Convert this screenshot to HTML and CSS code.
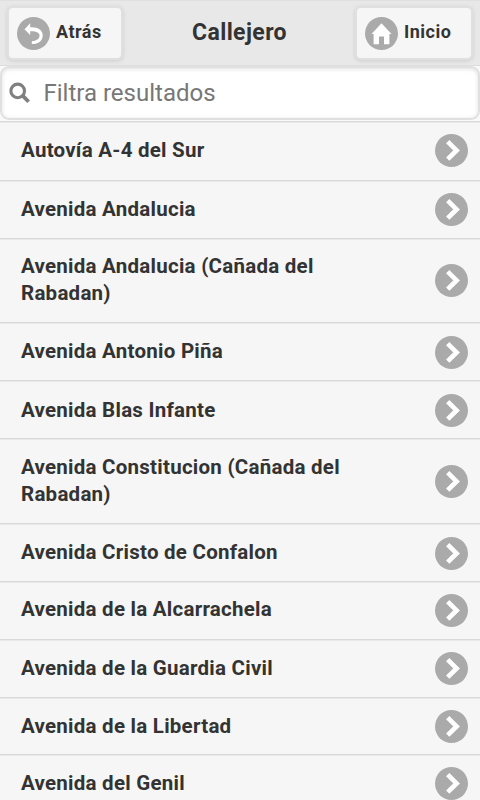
FILE: index.html
```html
<!DOCTYPE html>
<html lang="es">
<head>
<meta charset="utf-8">
<meta name="viewport" content="width=device-width">
<title>Callejero</title>
<link rel="stylesheet" href="styles.css">
</head>
<body>
<svg class="symbols" aria-hidden="true">
  <symbol id="next" viewBox="0 0 33 33"><circle cx="16.5" cy="16.5" r="16.5" fill="#aaa"/><path d="M12.7 7.6 21.6 16.4 12.7 25.2" fill="none" stroke="#fff" stroke-width="4.7"/></symbol>
</svg>
<header class="header">
  <a class="button">
    <svg class="button-icon" viewBox="0 0 33 33"><circle cx="16.5" cy="16.5" r="16.5" fill="#aaa"/><path d="M7.5 12.3 13.2 6.2V10.2C21 9.8 25.7 13.1 25.7 18.2 25.7 23.8 21.8 27 14.8 27V24.3C19.5 24 22.5 21.8 22.5 18.6 22.5 15.7 19.4 14.1 13.2 14.3V18Z" fill="#fff"/></svg>
    <span class="button-text">Atrás</span>
  </a>
  <h1 class="title">Callejero</h1>
  <a class="button button-home">
    <svg class="button-icon" viewBox="0 0 33 33"><circle cx="16.5" cy="16.5" r="16.5" fill="#aaa"/><path d="M16.5 6.3 26.5 17H24.4V27.3H19V19.5H14V27.3H8.6V17H6.5Z" fill="#fff"/></svg>
    <span class="button-text">Inicio</span>
  </a>
</header>
<div class="search">
  <svg class="search-icon" viewBox="0 0 22 22"><circle cx="8.7" cy="8.9" r="6.8" fill="none" stroke="#808080" stroke-width="3.1"/><path d="M13.4 13.4 19.6 19.8" stroke="#808080" stroke-width="3.8"/></svg>
  <span class="placeholder">Filtra resultados</span>
</div>
<ul class="list">
  <li class="item upper"><span class="label">Autovía A-4 del Sur</span><svg class="arrow"><use href="#next"/></svg></li>
  <li class="item"><span class="label">Avenida Andalucia</span><svg class="arrow"><use href="#next"/></svg></li>
  <li class="item upper"><span class="label">Avenida Andalucia (Cañada del Rabadan)</span><svg class="arrow"><use href="#next"/></svg></li>
  <li class="item lower"><span class="label">Avenida Antonio Piña</span><svg class="arrow"><use href="#next"/></svg></li>
  <li class="item lower"><span class="label label-lower">Avenida Blas Infante</span><svg class="arrow"><use href="#next"/></svg></li>
  <li class="item lower"><span class="label">Avenida Constitucion (Cañada del Rabadan)</span><svg class="arrow"><use href="#next"/></svg></li>
  <li class="item lower"><span class="label">Avenida Cristo de Confalon</span><svg class="arrow"><use href="#next"/></svg></li>
  <li class="item upper"><span class="label">Avenida de la Alcarrachela</span><svg class="arrow"><use href="#next"/></svg></li>
  <li class="item"><span class="label">Avenida de la Guardia Civil</span><svg class="arrow"><use href="#next"/></svg></li>
  <li class="item"><span class="label">Avenida de la Libertad</span><svg class="arrow"><use href="#next"/></svg></li>
  <li class="item"><span class="label">Avenida del Genil</span><svg class="arrow"><use href="#next"/></svg></li>
</ul>
</body>
</html>
```

FILE: styles.css
```css
* { box-sizing: border-box; }
body {
  margin: 0;
  height: 800px;
  overflow: hidden;
  display: flex;
  flex-direction: column;
  background: #f9f9f9;
  color: #333;
  font-family: Roboto, sans-serif;
}
.symbols { display: none; }
.header {
  flex: none;
  height: 66px;
  padding: 5px 7px 0;
  display: flex;
  justify-content: space-between;
  align-items: flex-start;
  background: #e8e8e8;
  border-top: 1px solid #e0e0e0;
  border-bottom: 1px solid #dedede;
}
.button {
  width: 116px;
  height: 54px;
  padding-left: 8px;
  display: flex;
  align-items: center;
  gap: 6px;
  background: #f6f6f6;
  border: 2px solid #e0e0e0;
  border-radius: 6px;
  box-shadow: 0 1px 4px rgba(0, 0, 0, .12);
}
.button-home { width: 118px; }
.button-icon { width: 33px; height: 33px; }
.button-text {
  padding-bottom: 3px;
  font-size: 18px;
  line-height: 24px;
  font-weight: 700;
  letter-spacing: .5px;
}
.title {
  margin: 12px 0 0 1px;
  font-size: 23px;
  line-height: 30px;
  font-weight: 700;
  letter-spacing: .4px;
}
.search {
  flex: none;
  height: 54px;
  padding-left: 7px;
  display: flex;
  align-items: center;
  background: #fff;
  border: 2px solid #e0e0e0;
  border-radius: 9px;
  box-shadow: inset 0 1px 4px rgba(0, 0, 0, .13);
}
.search-icon { width: 22px; height: 22px; }
.placeholder {
  margin-left: 12.5px;
  color: #777;
  font-size: 24px;
  line-height: 30px;
}
.list {
  flex: none;
  margin: 1px 0 0;
  padding: 0;
  list-style: none;
  display: grid;
  grid-template-rows: 59px 58px 84px 58px 58px 85px 58px 58px 58px 57px 58px;
}
.item {
  padding: 0 12px 0 21px;
  display: flex;
  align-items: center;
  justify-content: space-between;
  background: #f6f6f6;
  border-top: 1px solid #d9d9d9;
  box-shadow: inset 0 1px #e9e9e9;
}
.label {
  width: 350px;
  font-size: 20.5px;
  line-height: 27px;
  font-weight: 700;
  letter-spacing: .25px;
}
.label-lower { padding-top: 1px; }
.arrow { width: 33px; height: 33px; }
.upper .label { padding-bottom: 2px; }
.upper .arrow { margin-bottom: 1px; }
.lower .arrow { margin-top: 1px; }
```
